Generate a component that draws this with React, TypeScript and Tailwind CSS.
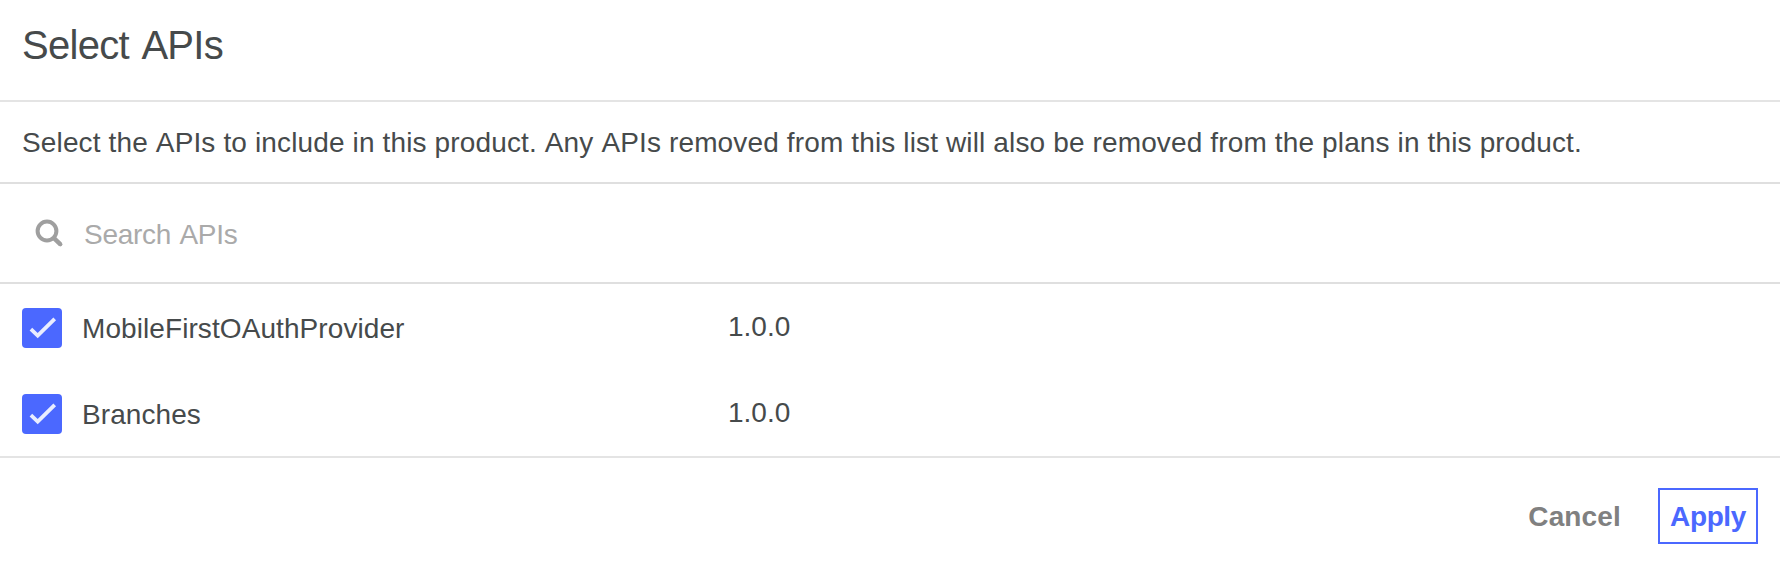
import { useState } from "react";

const initialApis = [
  { name: "MobileFirstOAuthProvider", version: "1.0.0" },
  { name: "Branches", version: "1.0.0" },
];

function SearchIcon() {
  return (
    <svg className="h-7 w-7 shrink-0" viewBox="0 0 28 28" fill="none" stroke="#9f9f9f">
      <circle cx="12" cy="12" r="9.4" strokeWidth="4" />
      <path d="M18.4 18.6 L25.2 25.2" strokeWidth="4.4" />
      <circle cx="25.3" cy="25.3" r="2.1" fill="#9f9f9f" stroke="none" />
    </svg>
  );
}

function Checkbox({ checked, onToggle }: { checked: boolean; onToggle: () => void }) {
  return (
    <button
      role="checkbox"
      aria-checked={checked}
      onClick={onToggle}
      className="h-10 w-10 shrink-0 rounded-[4px] bg-[#4b68ff]"
    >
      {checked && (
        <svg className="h-10 w-10" viewBox="0 0 40 40" fill="none" stroke="#e9edff" strokeWidth="3.8">
          <path d="M8.9 21.2 L15.7 27.6 L32.7 10.9" />
        </svg>
      )}
    </button>
  );
}

export default function App() {
  const [checked, setChecked] = useState([true, true]);
  const toggle = (i: number) => setChecked(checked.map((c, j) => (j === i ? !c : c)));

  return (
    <div className="flex h-[564px] w-[1780px] flex-col bg-white font-['Liberation_Sans',Arial,sans-serif] text-[28px] text-[#464a4b] [font-kerning:none]">
      <header className="h-[102px] border-b-2 border-[#e4e4e4] px-[22px]">
        <h1 className="text-[40px] leading-[90px] tracking-[-0.7px] [word-spacing:2px]">Select APIs</h1>
      </header>
      <p className="h-[82px] border-b-2 border-[#dfdfdf] px-[22px] leading-[82px] tracking-[0.138px] whitespace-nowrap">
        Select the APIs to include in this product. Any APIs removed from this list will also be removed from the plans in this product.
      </p>
      <div className="flex h-[100px] items-center border-b-2 border-[#dfdfdf] pl-[35px]">
        <SearchIcon />
        <span className="ml-[21px] pt-[4px] leading-8 tracking-[-0.3px] text-[#aaaaaa] [word-spacing:1px]">Search APIs</span>
      </div>
      <ul className="flex h-[174px] flex-col gap-[46px] border-b-2 border-[#e4e4e4] pt-6 pl-[22px]">
        {initialApis.map((api, i) => (
          <li key={api.name} className="flex h-10 items-center">
            <Checkbox checked={checked[i]} onToggle={() => toggle(i)} />
            <span className="ml-5 w-[646px] pt-[2px] leading-10 tracking-[0.08px]">{api.name}</span>
            <span className="pb-[2px] leading-9">{api.version}</span>
          </li>
        ))}
      </ul>
      <footer className="flex flex-1 items-start justify-end gap-[37px] pt-[30px] pr-[22px] font-bold">
        <button className="h-14 leading-[58px] tracking-[0.15px] text-[#808080]">Cancel</button>
        <button className="h-14 w-[100px] border-2 border-[#4b68ff] leading-[54px] tracking-[-0.4px] text-[#4b68ff]">Apply</button>
      </footer>
    </div>
  );
}
